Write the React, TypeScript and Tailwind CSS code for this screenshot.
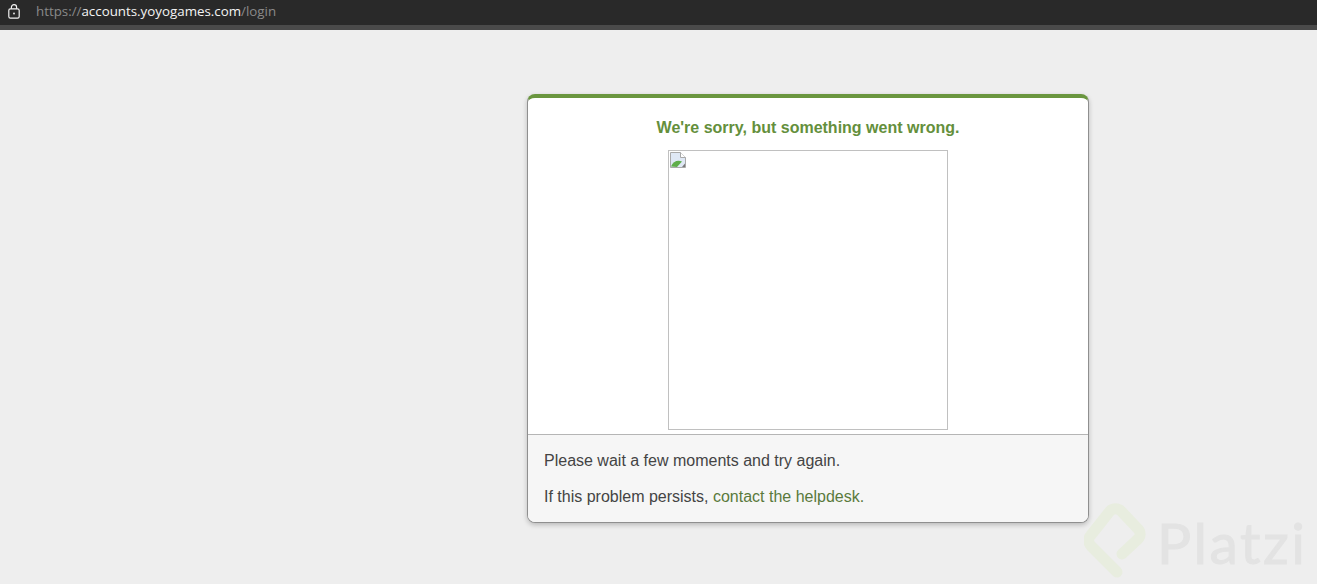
export default function App() {
    return (
        <div className="relative h-[584px] overflow-hidden bg-[#eeeeee] font-['Liberation_Sans',Arial,sans-serif]">
            <header className="h-[30px] bg-[#292929] border-b-[5px] border-[#4a4a4a] flex items-center pl-[8px] gap-[16px]">
                <svg width="12" height="15" viewBox="0 0 12 15" fill="none" stroke="#f2f2f2" strokeWidth="1.2" className="-mt-[2px]">
                    <rect x="0.8" y="4.8" width="10.4" height="9.4" rx="1.6" />
                    <path d="M3.4 4.8V3.2a2.6 2.6 0 0 1 5.2 0v1.6" />
                    <circle cx="6" cy="9.5" r="0.9" fill="#f2f2f2" stroke="none" />
                </svg>
                <div className="text-[13.33px] leading-none font-['Open_Sans',sans-serif] text-[#8a8a8a] -mt-[1px]">
                    https://<span className="text-[#f4f4f4]">accounts.yoyogames.com</span>/login
                </div>
            </header>

            <main className="ml-[527px] mt-[64px] w-[562px] h-[429px] flex flex-col bg-white rounded-[8px] border border-[#8f8f8f] border-t-[4px] border-t-[#6a963f] shadow-[0_2px_5px_rgba(0,0,0,0.22)] overflow-hidden">
                <div className="flex-1 flex flex-col items-center">
                    <h1 className="mt-[21px] text-[16px] leading-[18px] font-bold text-[#648f3c]">
                        We're sorry, but something went wrong.
                    </h1>
                    <div className="mt-[13px] w-[280px] h-[280px] border border-[#c0c0c0] p-[1px]">
                        <svg width="16" height="16" viewBox="0 0 16 16">
                            <path d="M0.5 0.5H10.5L15.5 5.5V15.5H0.5Z" fill="#dfe8f5" stroke="#a9a9a9" />
                            <path d="M10.5 0.5V5.5H15.5" fill="#ffffff" stroke="#a9a9a9" />
                            <path d="M1 14.5C3 9 8 7.5 12 9.5L7 15Z" fill="#5fae4a" />
                            <path d="M12 15L15 11.5V15Z" fill="#7a7a7a" />
                        </svg>
                    </div>
                </div>
                <div className="h-[88px] shrink-0 bg-[#f6f6f6] border-t border-[#b5b5b5] px-[16px] pt-[17px] text-[16px] leading-[18px] text-[#444444]">
                    <p>Please wait a few moments and try again.</p>
                    <p className="mt-[18px]">
                        If this problem persists, <a className="text-[#5a7a3c]">contact the helpdesk.</a>
                    </p>
                </div>
            </main>

            <div className="absolute left-[1084px] top-[503px] flex items-center gap-[11px]">
                <svg width="62" height="76" viewBox="0 0 62 76" fill="none" stroke="#e8eddf" strokeWidth="11" strokeLinejoin="round" strokeLinecap="round">
                    <path d="M33 69L7 43a8 8 0 0 1 0-11L26 8a8 8 0 0 1 11 0L54 26a7 7 0 0 1 0 10L38 51" />
                </svg>
                <div className="text-[57px] leading-none tracking-[2.5px] font-['Lato',sans-serif] text-[#e3e3e3] mt-[3px] [-webkit-text-stroke:1px_#e3e3e3]">Platzi</div>
            </div>
        </div>
    )
}
